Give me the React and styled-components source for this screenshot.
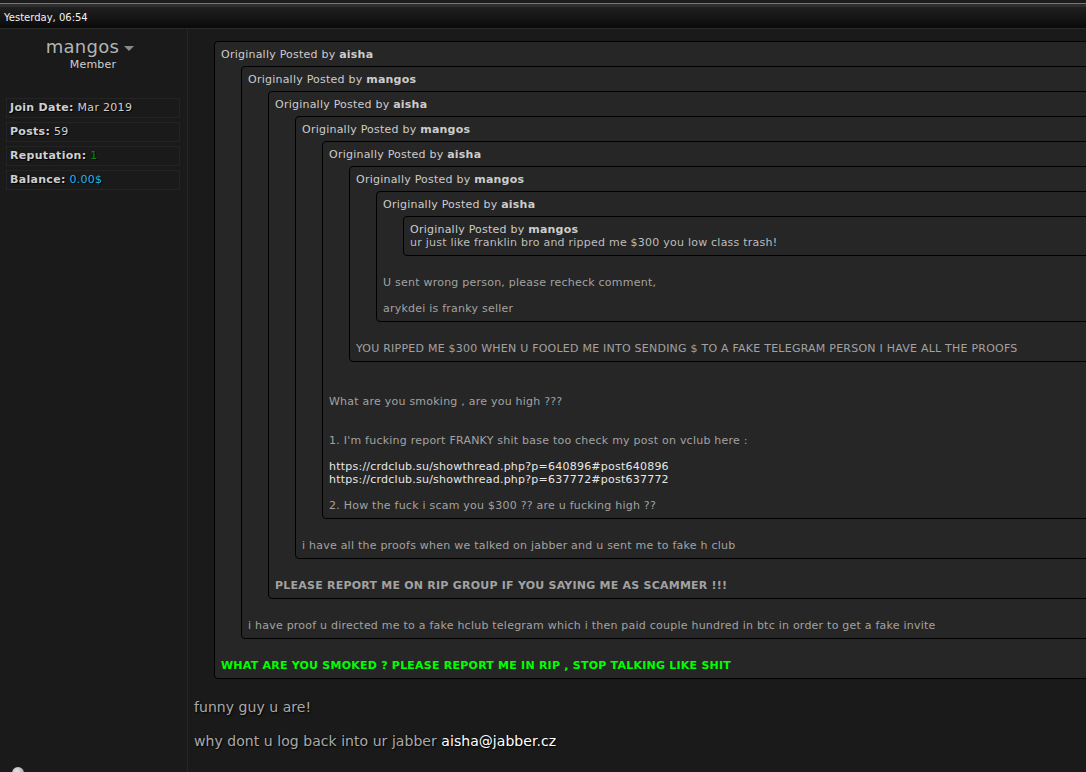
import styled, { createGlobalStyle } from "styled-components";

const GlobalStyle = createGlobalStyle`
  html, body {
    margin: 0;
    padding: 0;
    background: #1a1a1a;
    overflow: hidden;
  }
  body {
    font-family: "DejaVu Sans", Verdana, sans-serif;
    font-size: 11px;
  }
`;

const Page = styled.div`
  width: 1180px;
  min-height: 772px;
  background: #1a1a1a;
`;

const TopEdge = styled.div`
  height: 3px;
  background: #1c1c1c;
  border-bottom: 1px solid #3b8bb3;
`;

const TopShade = styled.div`
  height: 3px;
  background: #2e2e2e;
`;

const DateBar = styled.div`
  height: 21px;
  line-height: 21px;
  padding-left: 4px;
  color: #f2f2f2;
  font-size: 10px;
  background: linear-gradient(#202020, #0a0a0a);
  border-bottom: 1px solid #2a2a2a;
`;

const PostRow = styled.div`
  display: flex;
  align-items: stretch;
`;

const Sidebar = styled.div`
  width: 174px;
  flex: 0 0 174px;
  padding: 7px 7px 0 6px;
  border-right: 1px solid #262626;
  display: flex;
  flex-direction: column;
`;

const UserName = styled.div`
  text-align: center;
  font-size: 18px;
  line-height: 22px;
  letter-spacing: 0.3px;
  color: #b4b4b4;
  padding-right: 6px;
`;

const Caret = styled.span`
  display: inline-block;
  width: 0;
  height: 0;
  margin-left: 5px;
  vertical-align: middle;
  border-left: 5px solid transparent;
  border-right: 5px solid transparent;
  border-top: 5px solid #8a8a8a;
`;

const UserTitle = styled.div`
  text-align: center;
  color: #cfcfcf;
  line-height: 14px;
  letter-spacing: 0.2px;
  margin-bottom: 26px;
`;

const StatList = styled.div`
  display: flex;
  flex-direction: column;
  gap: 4px;
`;

const Stat = styled.div`
  height: 18px;
  line-height: 18px;
  border: 1px solid #242424;
  padding-left: 3px;
  color: #cfcfcf;
  letter-spacing: 0.3px;
  text-shadow: 1px 1px 1px #000;
  b {
    color: #cfcfcf;
  }
`;

const StatValue = styled.span`
  color: ${({ tone }) =>
    tone === "green" ? "#0b8a0b" : tone === "blue" ? "#1fb6f2" : "#cfcfcf"};
`;

const StatusDot = styled.div`
  width: 12px;
  height: 12px;
  border-radius: 50%;
  margin: 577px 0 0 6px;
  background: radial-gradient(circle at 40% 35%, #e6e6e6, #8a8a8a);
`;

const Message = styled.div`
  flex: 1;
  padding: 7px 0 24px 6px;
  color: #aaaaaa;
`;

const QuoteBox = styled.div`
  margin: 5px 0 20px 20px;
  padding: 6px;
  background: #262626;
  border: 1px solid #000;
  border-radius: 4px;
  line-height: 13px;
  letter-spacing: 0.23px;
  color: #a8a8a8;
`;

const QuoteHead = styled.div`
  color: #cccccc;
  b {
    color: #cccccc;
  }
`;

const QuoteText = styled.div`
  color: ${({ light }) => (light ? "#bdbdbd" : "#a2a2a2")};
  font-weight: ${({ bold }) => (bold ? "bold" : "normal")};
`;

const Shout = styled.div`
  color: #00ff00;
  font-weight: bold;
`;

const Link = styled.span`
  color: #e6e6e6;
`;

const PostText = styled.div`
  font-size: 14px;
  line-height: 17px;
  letter-spacing: 0.05px;
  color: #a9a9a9;
  text-shadow: 1px 1px 2px #000;
`;

const Email = styled.span`
  color: #ffffff;
`;

function Quote({ author, children }) {
  return (
    <QuoteBox>
      <QuoteHead>
        Originally Posted by <b>{author}</b>
      </QuoteHead>
      {children}
    </QuoteBox>
  );
}

export default function App() {
  return (
    <Page>
      <GlobalStyle />
      <TopEdge />
      <TopShade />
      <DateBar>Yesterday, 06:54</DateBar>
      <PostRow>
        <Sidebar>
          <UserName>
            mangos
            <Caret />
          </UserName>
          <UserTitle>Member</UserTitle>
          <StatList>
            <Stat>
              <b>Join Date:</b> Mar 2019
            </Stat>
            <Stat>
              <b>Posts:</b> 59
            </Stat>
            <Stat>
              <b>Reputation:</b> <StatValue tone="green">1</StatValue>
            </Stat>
            <Stat>
              <b>Balance:</b> <StatValue tone="blue">0.00$</StatValue>
            </Stat>
          </StatList>
          <StatusDot />
        </Sidebar>
        <Message>
          <Quote author="aisha">
            <Quote author="mangos">
              <Quote author="aisha">
                <Quote author="mangos">
                  <Quote author="aisha">
                    <Quote author="mangos">
                      <Quote author="aisha">
                        <Quote author="mangos">
                          <QuoteText light>
                            ur just like franklin bro and ripped me $300 you low class trash!
                          </QuoteText>
                        </Quote>
                        <QuoteText>
                          U sent wrong person, please recheck comment,
                          <br />
                          <br />
                          arykdei is franky seller
                        </QuoteText>
                      </Quote>
                      <QuoteText>
                        YOU RIPPED ME $300 WHEN U FOOLED ME INTO SENDING $ TO A FAKE TELEGRAM PERSON I HAVE ALL THE PROOFS
                      </QuoteText>
                    </Quote>
                    <QuoteText>
                      <br />
                      What are you smoking , are you high ???
                      <br />
                      <br />
                      <br />
                      1. I'm fucking report FRANKY shit base too check my post on vclub here :
                      <br />
                      <br />
                      <Link>https://crdclub.su/showthread.php?p=640896#post640896</Link>
                      <br />
                      <Link>https://crdclub.su/showthread.php?p=637772#post637772</Link>
                      <br />
                      <br />
                      2. How the fuck i scam you $300 ?? are u fucking high ??
                    </QuoteText>
                  </Quote>
                  <QuoteText>
                    i have all the proofs when we talked on jabber and u sent me to fake h club
                  </QuoteText>
                </Quote>
                <QuoteText bold>
                  PLEASE REPORT ME ON RIP GROUP IF YOU SAYING ME AS SCAMMER !!!
                </QuoteText>
              </Quote>
              <QuoteText>
                i have proof u directed me to a fake hclub telegram which i then paid couple hundred in btc in order to get a fake invite
              </QuoteText>
            </Quote>
            <Shout>
              WHAT ARE YOU SMOKED ? PLEASE REPORT ME IN RIP , STOP TALKING LIKE SHIT
            </Shout>
          </Quote>
          <PostText>
            funny guy u are!
            <br />
            <br />
            why dont u log back into ur jabber <Email>aisha@jabber.cz</Email>
          </PostText>
        </Message>
      </PostRow>
    </Page>
  );
}
